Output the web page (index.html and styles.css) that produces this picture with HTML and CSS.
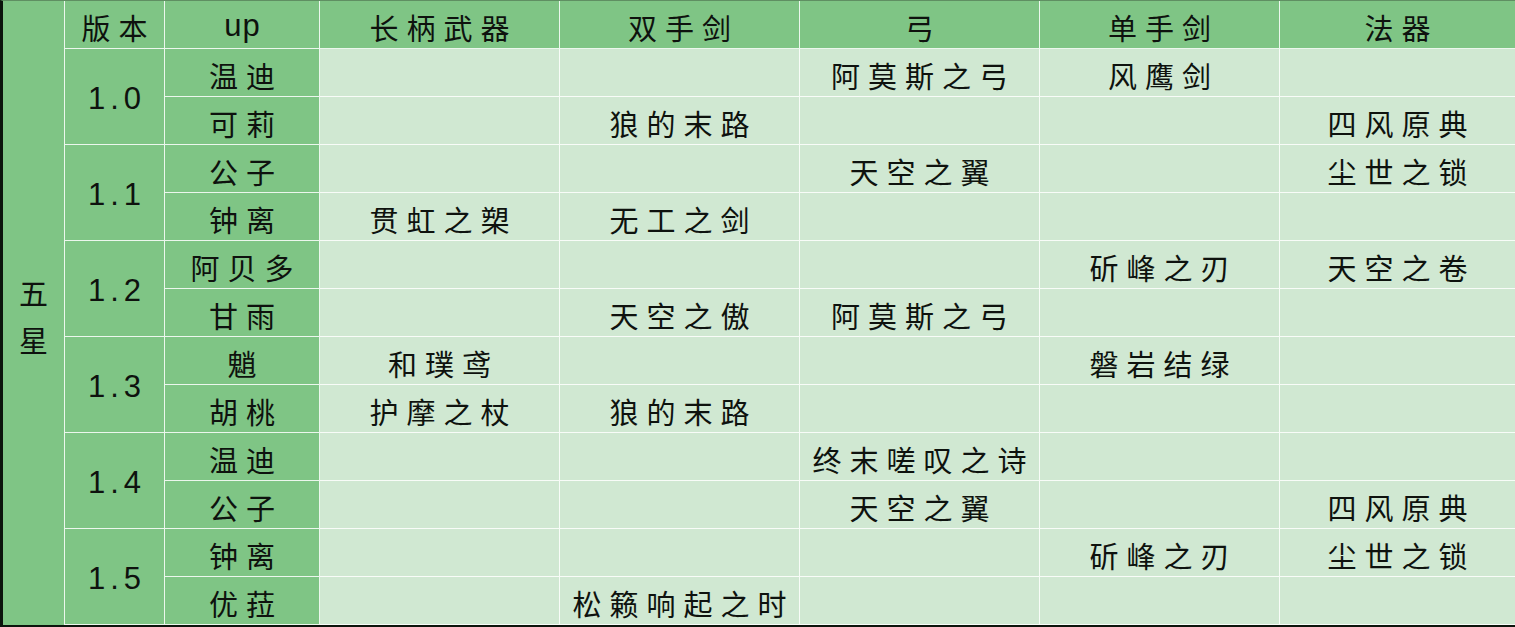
FILE: index.html
```html
<!DOCTYPE html>
<html lang="zh-CN">
<head>
<meta charset="utf-8">
<title>五星武器UP表</title>
<link rel="stylesheet" href="styles.css">
</head>
<body>
<table class="gacha">
  <colgroup>
    <col class="c-star"><col class="c-ver"><col class="c-up">
    <col class="c-w"><col class="c-w"><col class="c-w"><col class="c-w"><col class="c-last">
  </colgroup>
  <tr>
    <th class="star" rowspan="13"><span class="vert">五<br>星</span></th>
    <th class="head">版本</th>
    <th class="head latin">up</th>
    <th class="head">长柄武器</th>
    <th class="head">双手剑</th>
    <th class="head">弓</th>
    <th class="head">单手剑</th>
    <th class="head">法器</th>
  </tr>
  <tr>
    <th class="ver" rowspan="2">1.0</th><th class="name">温迪</th>
    <td></td><td></td><td>阿莫斯之弓</td><td>风鹰剑</td><td></td>
  </tr>
  <tr>
    <th class="name">可莉</th>
    <td></td><td>狼的末路</td><td></td><td></td><td>四风原典</td>
  </tr>
  <tr>
    <th class="ver" rowspan="2">1.1</th><th class="name">公子</th>
    <td></td><td></td><td>天空之翼</td><td></td><td>尘世之锁</td>
  </tr>
  <tr>
    <th class="name">钟离</th>
    <td>贯虹之槊</td><td>无工之剑</td><td></td><td></td><td></td>
  </tr>
  <tr>
    <th class="ver" rowspan="2">1.2</th><th class="name">阿贝多</th>
    <td></td><td></td><td></td><td>斫峰之刃</td><td>天空之卷</td>
  </tr>
  <tr>
    <th class="name">甘雨</th>
    <td></td><td>天空之傲</td><td>阿莫斯之弓</td><td></td><td></td>
  </tr>
  <tr>
    <th class="ver" rowspan="2">1.3</th><th class="name">魈</th>
    <td>和璞鸢</td><td></td><td></td><td>磐岩结绿</td><td></td>
  </tr>
  <tr>
    <th class="name">胡桃</th>
    <td>护摩之杖</td><td>狼的末路</td><td></td><td></td><td></td>
  </tr>
  <tr>
    <th class="ver" rowspan="2">1.4</th><th class="name">温迪</th>
    <td></td><td></td><td>终末嗟叹之诗</td><td></td><td></td>
  </tr>
  <tr>
    <th class="name">公子</th>
    <td></td><td></td><td>天空之翼</td><td></td><td>四风原典</td>
  </tr>
  <tr>
    <th class="ver" rowspan="2">1.5</th><th class="name">钟离</th>
    <td></td><td></td><td></td><td>斫峰之刃</td><td>尘世之锁</td>
  </tr>
  <tr>
    <th class="name">优菈</th>
    <td></td><td>松籁响起之时</td><td></td><td></td><td></td>
  </tr>
</table>
</body>
</html>
```

FILE: styles.css
```css
html, body {
  margin: 0;
  padding: 0;
  background: #d0e8d2;
}

.gacha {
  width: 1515px;
  table-layout: fixed;
  border-collapse: separate;
  border-spacing: 0;
  border-left: 3px solid #0c140c;
  border-top: 1px solid #5f8f62;
  border-bottom: 2px solid #0c140c;
  font-family: "Noto Sans CJK SC", "Noto Sans CJK JP", sans-serif;
  font-size: 29px;
  color: #0e120e;
}

.c-star { width: 62px; }
.c-ver { width: 100px; }
.c-up { width: 155px; }
.c-w { width: 240px; }
.c-last { width: 235px; }

.gacha tr {
  height: 48px;
}

.gacha th,
.gacha td {
  padding: 5px 0 0 8px;
  text-align: center;
  vertical-align: middle;
  font-weight: 400;
  line-height: 38px;
  letter-spacing: 8px;
  white-space: nowrap;
  border-right: 1px solid rgba(255, 255, 255, 0.85);
  border-bottom: 1px solid rgba(255, 255, 255, 0.85);
  box-sizing: border-box;
  height: 48px;
}

.gacha th {
  background: #7fc585;
}

.gacha td {
  background: #d0e8d2;
}

.gacha th.star {
  border-bottom: none;
  padding-left: 0;
  padding-top: 6px;
  letter-spacing: 0;
}

.vert {
  display: inline-block;
  line-height: 47px;
}

.gacha th.ver {
  font-family: "Liberation Sans", Arial, sans-serif;
  font-size: 31px;
  letter-spacing: 5px;
  padding-left: 5px;
  padding-top: 4px;
}

.gacha th.latin {
  font-family: "Liberation Sans", Arial, sans-serif;
  font-size: 31px;
  letter-spacing: 1px;
  padding-left: 1px;
  padding-top: 2px;
}

.gacha tr > :last-child {
  border-right: none;
}
```
